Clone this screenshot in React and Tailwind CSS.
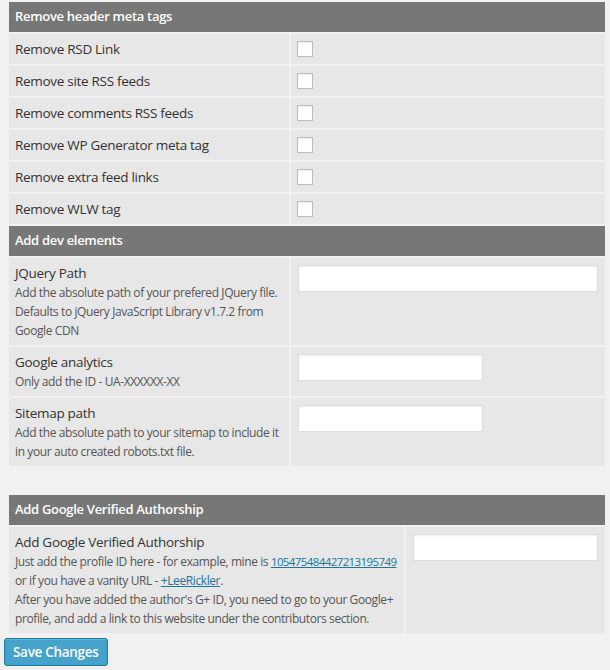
const font = { fontFamily: '"Open Sans", "Noto Sans", sans-serif' };

const metaRows = [
  'Remove RSD Link',
  'Remove site RSS feeds',
  'Remove comments RSS feeds',
  'Remove WP Generator meta tag',
  'Remove extra feed links',
  'Remove WLW tag',
];

function Header({ children }) {
  return (
    <div className="col-span-2 h-[30px] bg-[#777777] pl-[6px] flex items-center text-[13px] font-semibold tracking-[-0.3px] text-white">
      {children}
    </div>
  );
}

function Checkbox() {
  return (
    <span className="block w-[16px] h-[16px] bg-white border border-[#bbbbbb] shadow-[inset_0_1px_2px_rgba(0,0,0,0.07)]" />
  );
}

function TextInput({ wide }) {
  return (
    <input
      type="text"
      className={`block h-[27px] bg-white border border-[#dddddd] shadow-[inset_0_1px_2px_rgba(0,0,0,0.07)] outline-none ${wide ? 'w-full' : 'w-[185px]'}`}
    />
  );
}

function FieldRow({ label, lines, input }) {
  return (
    <>
      <div className="bg-[#e7e7e7] pl-[6px] pt-[6px] pb-[5px] overflow-hidden">
        <p className="text-[13.5px] leading-[19px] tracking-[-0.3px] text-[#333333]">{label}</p>
        {lines.map((line, i) => (
          <p key={i} className="text-[12px] leading-[19px] tracking-[-0.4px] text-[#555555] whitespace-nowrap">
            {line}
          </p>
        ))}
      </div>
      <div className="bg-[#e7e7e7] px-[7px] pt-[7px]">{input}</div>
    </>
  );
}

export default function App() {
  return (
    <div className="min-h-[670px] w-[610px] bg-[#f1f1f1] pt-[2px]" style={font}>
      <div className="ml-[9px] w-[596px] grid grid-cols-[280px_314px] gap-[2px]">
        <Header>Remove header meta tags</Header>
        {metaRows.map((label) => (
          <div key={label} className="contents">
            <div className="h-[30px] bg-[#e7e7e7] pl-[6px] flex items-center text-[13.5px] tracking-[-0.3px] text-[#333333]">
              {label}
            </div>
            <div className="h-[30px] bg-[#e7e7e7] pl-[6px] flex items-center">
              <Checkbox />
            </div>
          </div>
        ))}

        <Header>Add dev elements</Header>
        <FieldRow
          label="JQuery Path"
          input={<TextInput wide />}
          lines={[
            'Add the absolute path of your prefered JQuery file.',
            'Defaults to jQuery JavaScript Library v1.7.2 from',
            'Google CDN',
          ]}
        />
        <FieldRow
          label="Google analytics"
          input={<TextInput />}
          lines={['Only add the ID - UA-XXXXXX-XX']}
        />
        <FieldRow
          label="Sitemap path"
          input={<TextInput />}
          lines={[
            'Add the absolute path to your sitemap to include it',
            'in your auto created robots.txt file.',
          ]}
        />
      </div>

      <div className="ml-[9px] mt-[29px] w-[596px] grid grid-cols-[395px_199px] gap-[2px]">
        <Header>Add Google Verified Authorship</Header>
        <FieldRow
          label="Add Google Verified Authorship"
          input={<TextInput />}
          lines={[
            <>
              Just add the profile ID here - for example, mine is{' '}
              <a href="#" className="text-[11.5px] tracking-[-0.6px] text-[#21759b] underline">105475484427213195749</a>
            </>,
            <>
              or if you have a vanity URL -{' '}
              <a href="#" className="text-[#21759b] underline">+LeeRickler</a>.
            </>,
            "After you have added the author's G+ ID, you need to go to your Google+",
            'profile, and add a link to this website under the contributors section.',
          ]}
        />
      </div>

      <div className="pl-[4px] pt-[5px]">
        <button className="h-[28px] px-[8px] rounded-[3px] bg-[#45a2ca] border border-[#1d7aa3] shadow-[inset_0_1px_0_rgba(120,200,230,0.5)] text-[13.5px] font-semibold tracking-[-0.3px] text-white">
          Save Changes
        </button>
      </div>
    </div>
  );
}
